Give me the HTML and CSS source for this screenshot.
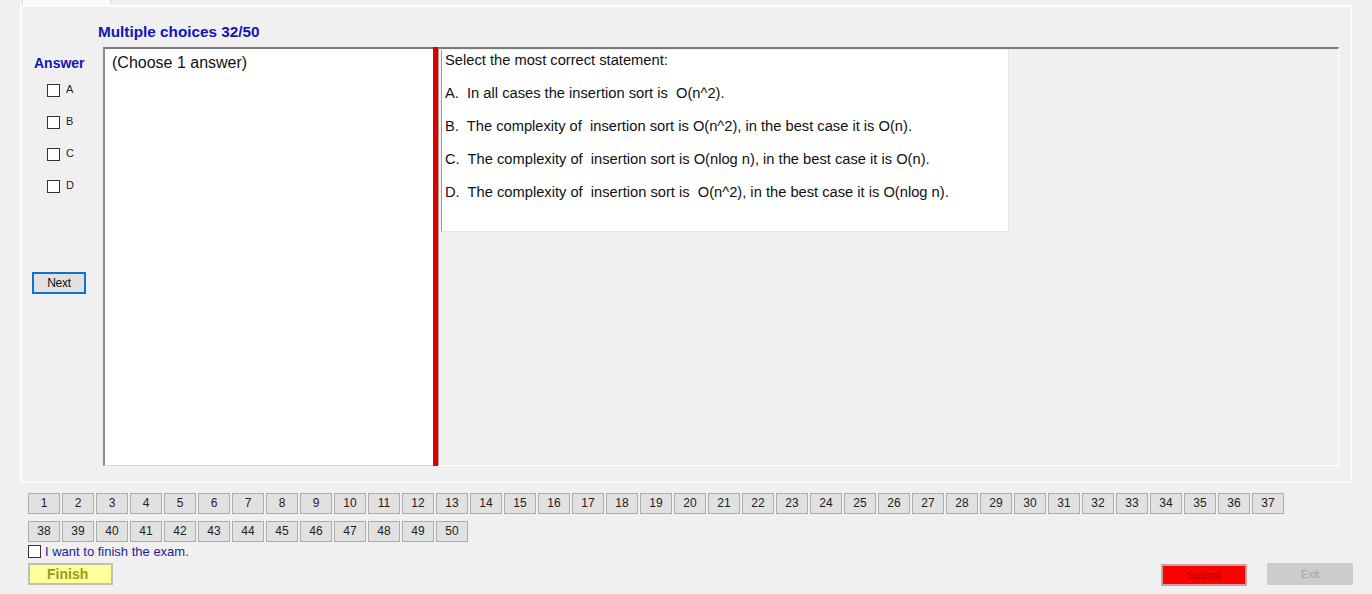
FILE: index.html
```html
<!DOCTYPE html>
<html>
<head>
<meta charset="utf-8">
<link rel="stylesheet" href="styles.css">
</head>
<body>
<div class="tabs"><div class="tab"></div></div>
<div class="page">
  <div class="title">Multiple choices 32/50</div>
  <div class="content">
    <div class="answers">
      <div class="answer-label">Answer</div>
      <div class="options">
        <div class="opt"><span class="cb"></span><span class="opt-text">A</span></div>
        <div class="opt"><span class="cb"></span><span class="opt-text">B</span></div>
        <div class="opt"><span class="cb"></span><span class="opt-text">C</span></div>
        <div class="opt"><span class="cb"></span><span class="opt-text">D</span></div>
      </div>
      <div class="next">Next</div>
    </div>
    <div class="choose">(Choose 1 answer)</div>
    <div class="redbar"></div>
    <div class="qpanel">
      <div class="qbox">
        <p>Select the most correct statement:</p>
        <p>A.&nbsp; In all cases the insertion sort is &nbsp;O(n^2).</p>
        <p>B.&nbsp; The complexity of &nbsp;insertion sort is O(n^2), in the best case it is O(n).</p>
        <p>C.&nbsp; The complexity of &nbsp;insertion sort is O(nlog n), in the best case it is O(n).</p>
        <p>D.&nbsp; The complexity of &nbsp;insertion sort is &nbsp;O(n^2), in the best case it is O(nlog n).</p>
      </div>
    </div>
  </div>
</div>
<div class="bottom">
  <div class="nums">
    <div class="num">1</div><div class="num">2</div><div class="num">3</div><div class="num">4</div><div class="num">5</div><div class="num">6</div><div class="num">7</div><div class="num">8</div><div class="num">9</div><div class="num">10</div>
    <div class="num">11</div><div class="num">12</div><div class="num">13</div><div class="num">14</div><div class="num">15</div><div class="num">16</div><div class="num">17</div><div class="num">18</div><div class="num">19</div><div class="num">20</div>
    <div class="num">21</div><div class="num">22</div><div class="num">23</div><div class="num">24</div><div class="num">25</div><div class="num">26</div><div class="num">27</div><div class="num">28</div><div class="num">29</div><div class="num">30</div>
    <div class="num">31</div><div class="num">32</div><div class="num">33</div><div class="num">34</div><div class="num">35</div><div class="num">36</div><div class="num">37</div><div class="num">38</div><div class="num">39</div><div class="num">40</div>
    <div class="num">41</div><div class="num">42</div><div class="num">43</div><div class="num">44</div><div class="num">45</div><div class="num">46</div><div class="num">47</div><div class="num">48</div><div class="num">49</div><div class="num">50</div>
  </div>
  <div class="finish-check"><span class="cb"></span><span class="finish-text">I want to finish the exam.</span></div>
  <div class="actions">
    <div class="btn-finish">Finish</div>
    <div class="btn-submit">Submit</div>
    <div class="btn-exit">Exit</div>
  </div>
</div>
</body>
</html>
```
FILE: styles.css
```css
* { box-sizing: border-box; }
html, body { margin: 0; padding: 0; }
body {
  background: #f0f0f0;
  font-family: "Liberation Sans", Arial, sans-serif;
  width: 1372px;
  height: 594px;
  overflow: hidden;
  color: #000;
}
.tabs { height: 5px; padding-left: 22px; display: flex; }
.tab { width: 89px; height: 5px; background: #fbfbfb; border-left: 1px solid #dcdcdc; border-right: 1px solid #dcdcdc; }
.page {
  margin-left: 20px;
  width: 1332px;
  height: 478px;
  border: 1px solid #fff;
  box-shadow: inset 1px 1px 0 #fafafa;
}
.title {
  margin: 18px 0 0 77px;
  height: 16px;
  line-height: 16px;
  font-size: 15.3px;
  font-weight: bold;
  color: #1414b4;
}
.content {
  margin-top: 7px;
  display: flex;
  height: 419px;
}
.answers { width: 82px; flex: none; }
.answer-label {
  margin: 8px 0 0 13px;
  line-height: 16px;
  font-size: 14px;
  font-weight: bold;
  color: #1414b4;
}
.options { margin: 3px 0 0 26px; }
.opt { height: 32px; display: flex; align-items: center; }
.cb {
  display: inline-block;
  width: 13px;
  height: 13px;
  border: 1px solid #333;
  background: #fff;
  flex: none;
}
.opt-text { margin-left: 6px; font-size: 11px; color: #222; position: relative; top: -1px; }
.next {
  margin: 70px 0 0 11px;
  width: 54px;
  height: 22px;
  border: 2px solid #0a74cf;
  background: #e1e1e1;
  font-size: 12px;
  line-height: 18px;
  text-align: center;
  color: #111;
  letter-spacing: -0.3px;
}
.choose {
  width: 330px;
  flex: none;
  background: #fff;
  border-top: 2px solid #7a7a7a;
  border-left: 2px solid #8a8a8a;
  border-bottom: 1px solid #d8d8d8;
  padding: 5px 0 0 7px;
  font-size: 16px;
  line-height: 18px;
  color: #111;
}
.redbar {
  width: 5px;
  flex: none;
  background: #e00000;
  border-right: 1px solid #6b2424;
}
.qpanel {
  flex: 1;
  margin-right: 12px;
  border-top: 2px solid #7a7a7a;
  border-left: 1px solid #a8a8a8;
  border-right: 1px solid #fff;
  border-bottom: 1px solid #fff;
  padding: 1px 0 0 2px;
}
.qbox {
  width: 568px;
  height: 182px;
  background: #fff;
  border-left: 1px solid #9a9a9a;
  border-right: 1px solid #e4e4e4;
  border-bottom: 1px solid #e4e4e4;
  padding: 2px 0 0 3px;
  font-size: 14.7px;
  color: #111;
}
.qbox p { margin: 0 0 17px 0; line-height: 16px; white-space: nowrap; }
.bottom { padding-left: 28px; }
.nums {
  margin-top: 10px;
  width: 1260px;
  display: flex;
  flex-wrap: wrap;
  column-gap: 2px;
  row-gap: 7px;
}
.num {
  width: 32px;
  height: 21px;
  background: #e1e1e1;
  border: 1px solid #adadad;
  font-size: 12px;
  line-height: 19px;
  text-align: center;
  color: #222;
}
.finish-check { margin-top: 2px; height: 14px; display: flex; align-items: center; }
.finish-text { margin-left: 4px; font-size: 13px; color: #1c1ca0; }
.actions { margin-top: 5px; display: flex; padding-right: 19px; }
.btn-finish {
  width: 85px;
  height: 22px;
  background: #ffff9c;
  border: 2px solid #c0c0b0;
  font-size: 14px;
  font-weight: bold;
  color: #9c9c10;
  line-height: 18px;
  padding-left: 17px;
}
.btn-submit {
  margin-left: auto;
  margin-top: 1px;
  width: 86px;
  height: 22px;
  background: #ff0000;
  border: 2px solid #c8a0a0;
  font-size: 11px;
  color: #9a0000;
  line-height: 18px;
  text-align: center;
}
.btn-exit {
  margin-left: 20px;
  width: 86px;
  height: 22px;
  background: #cccccc;
  font-size: 11px;
  color: #a4a4a4;
  line-height: 22px;
  text-align: center;
}
```
